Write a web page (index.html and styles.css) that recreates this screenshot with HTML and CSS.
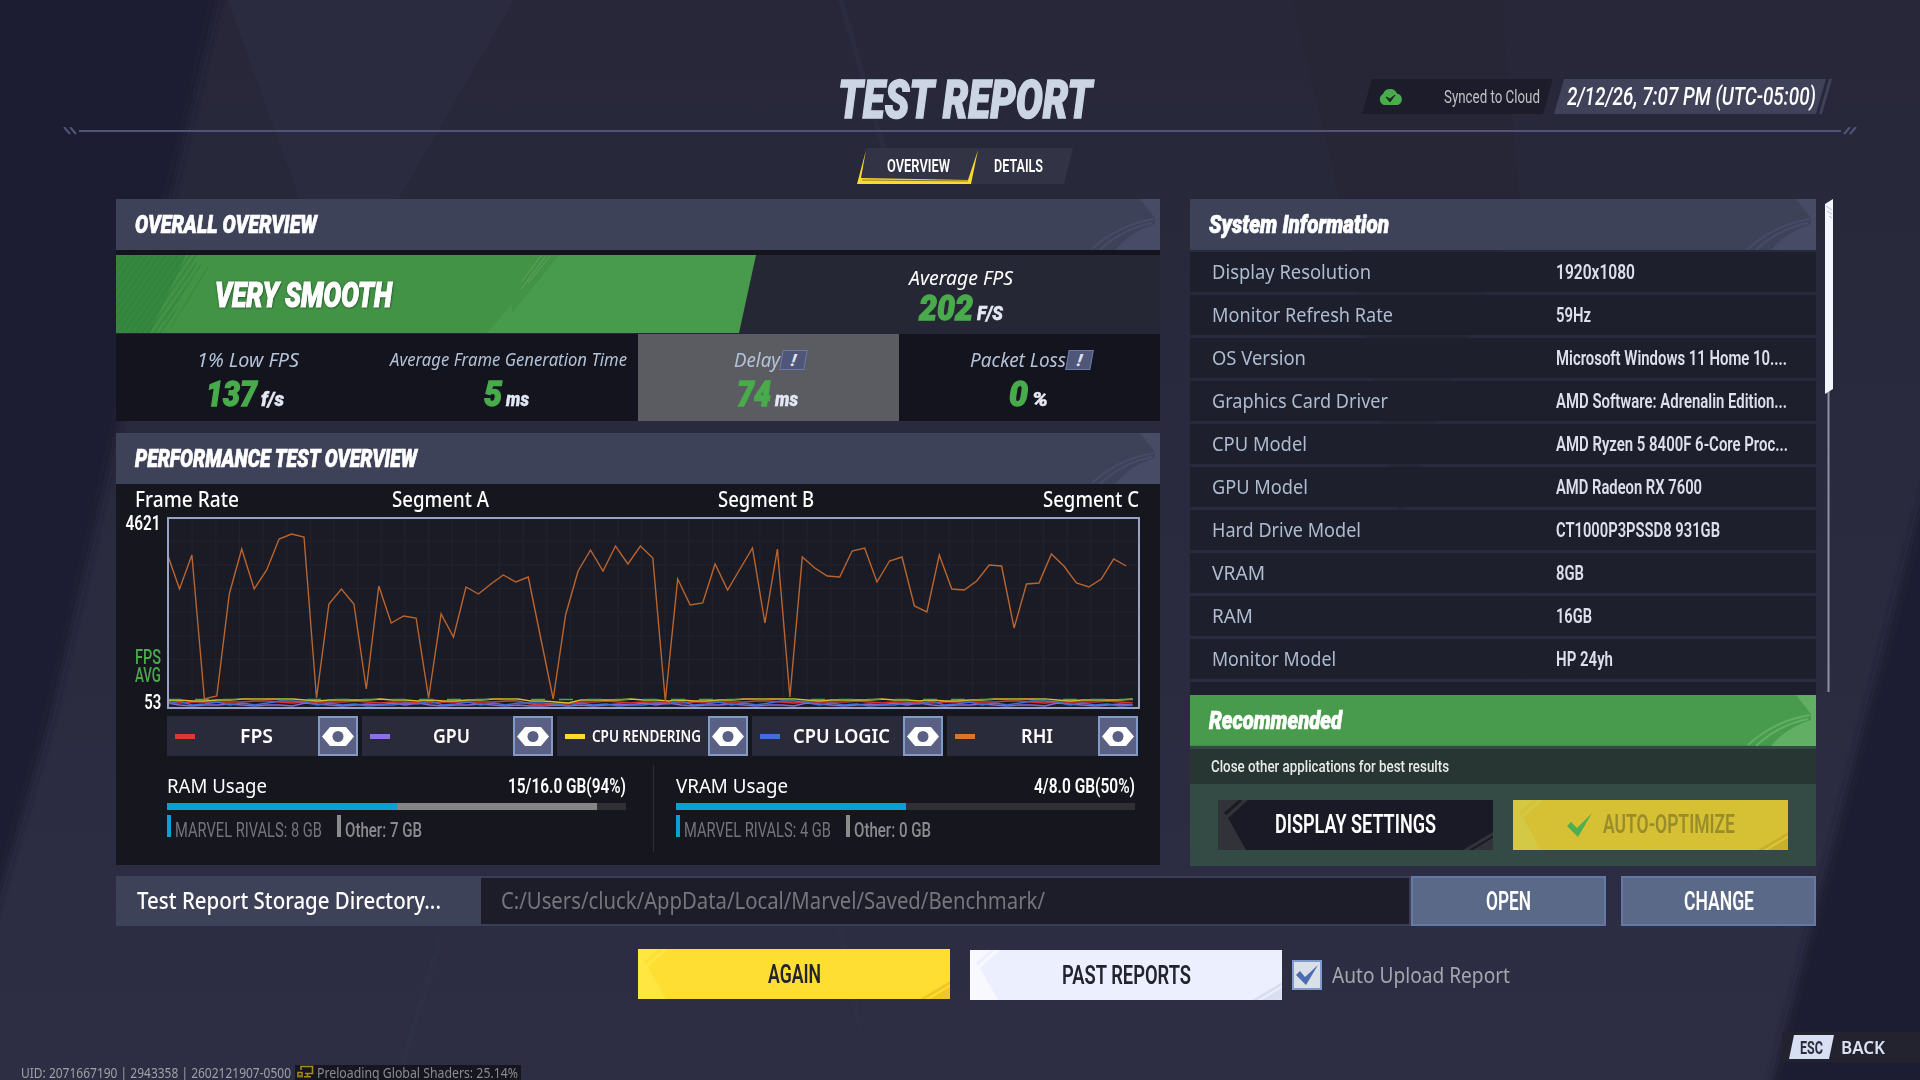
FILE: index.html
```html
<!DOCTYPE html>
<html lang="en">
<head>
    <meta charset="UTF-8">
    <title>Test Report</title>
    <link rel="stylesheet" href="styles.css">
</head>
<body>
    <svg class="backdrop" viewBox="0 0 1920 1080">
        <defs>
            <linearGradient id="bg" x1="0" y1="0" x2="0" y2="1">
                <stop offset="0" stop-color="#272739"/>
                <stop offset="1" stop-color="#2d2e44"/>
            </linearGradient>
            <filter id="soft"><feGaussianBlur stdDeviation="5"/></filter>
        </defs>
        <rect width="1920" height="1080" fill="url(#bg)"/>
        <polygon points="224,-10 520,-10 340,300 300,200" fill="#2a2b3f"/>
        <polygon points="1290,-10 1500,-10 1520,200 1400,520 1340,200" fill="#272636"/>
        <polygon points="-20,-20 222,-20 170,199 106,480 50,720 -20,960" fill="#1b1b31" filter="url(#soft)"/>
        <polygon points="1930,470 1860,740 1808,940 1770,1090 1930,1090" fill="#1d1d33" filter="url(#soft)"/>
        <path d="M838 -10L890 170M440 940L395 1090M840 930L860 1030" stroke="#303349" stroke-width="5" opacity=".4"/>
    </svg>

    <header class="top">
        <h1><span data-w="254">TEST REPORT</span></h1>
        <div class="badges">
            <div class="synced">
                <svg width="26" height="16" viewBox="0 0 26 16"><path d="M6 16a6 6 0 0 1-1-11A7.5 7.5 0 0 1 19 4.500a6 6 0 0 1 1 11.500z" fill="#49ab4b"/><path d="M8 8l4 5 5-7-5 4z" fill="#1c2a24" stroke="#1c2a24"/></svg>
                <span data-w="96">Synced to Cloud</span>
            </div>
            <div class="date"><span data-w="249">2/12/26, 7:07 PM (UTC-05:00)</span></div>
            <i class="date-edge"></i>
        </div>
    </header>
    <svg class="rule" width="1794" height="10" viewBox="0 0 1794 10">
        <path d="M16 4H1778" stroke="#50547a" stroke-width="2"/>
        <path d="M1 0l6 7M7 0l6 7M1793 0l-6 7M1787 0l-6 7" stroke="#50547a" stroke-width="2"/>
    </svg>

    <nav class="tabs">
        <svg width="218" height="37" viewBox="0 0 218 37">
            <polygon points="11,0 217,0 208,36 2,36" fill="#323446"/>
            <path d="M10 2L1 36H115L122 2L112 32L5 30z" fill="#ffd92b"/>
            <path d="M6 32L112 33" stroke="#8a7a30" stroke-width="1"/>
        </svg>
        <a class="tab-overview"><span data-w="63">OVERVIEW</span></a>
        <a class="tab-details"><span data-w="49">DETAILS</span></a>
    </nav>

    <main>
        <div class="left">
            <section class="panel">
                <h2><span data-w="182">OVERALL OVERVIEW</span><svg class="swoosh"><use href="#swoosh"/></svg></h2>
                <div class="rating">
                    <svg width="640" height="78" viewBox="0 0 640 78">
                        <defs><pattern id="hatch" width="5" height="5" patternUnits="userSpaceOnUse" patternTransform="rotate(35)"><rect width="1.500" height="5" fill="#2e7f3b"/></pattern></defs>
                        <polygon points="0,0 640,0 623,78 0,78" fill="#489b4c"/>
                        <polygon points="0,0 443,0 396,58 396,49 371,78 0,78" fill="#439346"/>
                        <polygon points="0,0 70,0 34,78 0,78" fill="#36883f"/>
                        <polygon points="0,0 84,0 50,78 0,78" fill="url(#hatch)" opacity=".7"/>
                        <path d="M92 12L55 72M86 8L48 66" stroke="#36883f" stroke-width="1.500" opacity=".6"/>
                        <path d="M430 1L405 34M434 1L412 28M425 1L406 26" stroke="#6fb072" stroke-width="1" opacity=".6"/>
                    </svg>
                    <strong><span data-w="177">VERY SMOOTH</span></strong>
                    <div class="average">
                        <em><span data-w="104">Average FPS</span></em>
                        <p><b><span data-w="54">202</span></b><small><span data-w="26">F/S</span></small></p>
                    </div>
                </div>
                <div class="stats">
                    <div><em><span data-w="102">1% Low FPS</span></em><p><b><span data-w="51">137</span></b><small><span data-w="23">f/s</span></small></p></div>
                    <div><em class="small"><span data-w="237">Average Frame Generation Time</span></em><p><b><span data-w="18">5</span></b><small><span data-w="23">ms</span></small></p></div>
                    <div class="hover"><em><span data-w="46">Delay</span><i class="info">!</i></em><p><b><span data-w="34">74</span></b><small><span data-w="23">ms</span></small></p></div>
                    <div><em><span data-w="96">Packet Loss</span><i class="info">!</i></em><p><b><span data-w="19">0</span></b><small><span data-w="16">%</span></small></p></div>
                </div>
            </section>

            <section class="panel perf">
                <h2><span data-w="282">PERFORMANCE TEST OVERVIEW</span><svg class="swoosh"><use href="#swoosh"/></svg></h2>
                <div class="segments">
                    <span data-w="104">Frame Rate</span>
                    <span data-w="97">Segment A</span>
                    <span data-w="96">Segment B</span>
                    <span data-w="96">Segment C</span>
                </div>
                <div class="chart-row">
                    <div class="axis">
                        <span data-w="35">4621</span>
                        <span class="avg" data-w="26">FPS</span>
                        <span class="avg" data-w="26">AVG</span>
                        <span data-w="17">53</span>
                    </div>
                    <svg id="chart" width="973" height="192" viewBox="0 0 973 192">
                        <defs><pattern id="grid" x="2" y="1" width="23.650" height="23.650" patternUnits="userSpaceOnUse"><path d="M23.150 0V23.650M0 23.150H23.650" stroke="#21222e"/></pattern></defs>
                        <rect width="973" height="192" fill="#1b1b25"/>
                        <rect width="973" height="192" fill="url(#grid)"/>
                    </svg>
                </div>
                <div class="legend">
                    <div><i class="fps"></i><span data-w="33">FPS</span><svg><use href="#eye"/></svg></div>
                    <div><i class="gpu"></i><span data-w="37">GPU</span><svg><use href="#eye"/></svg></div>
                    <div><i class="cpu-r"></i><span class="tiny" data-w="109">CPU RENDERING</span><svg><use href="#eye"/></svg></div>
                    <div><i class="cpu-l"></i><span data-w="97">CPU LOGIC</span><svg><use href="#eye"/></svg></div>
                    <div><i class="rhi"></i><span data-w="32">RHI</span><svg><use href="#eye"/></svg></div>
                </div>
                <div class="memory">
                    <div>
                        <p class="usage"><span data-w="100">RAM Usage</span><b><span data-w="118">15/16.0 GB(94%)</span></b></p>
                        <div class="bar"><i style="width: 230px"></i><u style="width: 200px"></u></div>
                        <p class="split"><span data-w="147">MARVEL RIVALS: 8 GB</span><i class="other"></i><span class="lit" data-w="77">Other: 7 GB</span></p>
                    </div>
                    <hr>
                    <div>
                        <p class="usage"><span data-w="112">VRAM Usage</span><b><span data-w="101">4/8.0 GB(50%)</span></b></p>
                        <div class="bar"><i style="width: 230px"></i></div>
                        <p class="split"><span data-w="147">MARVEL RIVALS: 4 GB</span><i class="other"></i><span class="lit" data-w="77">Other: 0 GB</span></p>
                    </div>
                </div>
            </section>
        </div>

        <div class="right">
            <section class="system">
                <h2><span data-w="180">System Information</span><svg class="swoosh"><use href="#swoosh"/></svg></h2>
                <dl>
                    <div><dt><span data-w="159">Display Resolution</span></dt><dd><span data-w="79">1920x1080</span></dd></div>
                    <div><dt><span data-w="181">Monitor Refresh Rate</span></dt><dd><span data-w="35">59Hz</span></dd></div>
                    <div><dt><span data-w="94">OS Version</span></dt><dd><span data-w="231">Microsoft Windows 11 Home 10....</span></dd></div>
                    <div><dt><span data-w="176">Graphics Card Driver</span></dt><dd><span data-w="231">AMD Software: Adrenalin Edition...</span></dd></div>
                    <div><dt><span data-w="95">CPU Model</span></dt><dd><span data-w="232">AMD Ryzen 5 8400F 6-Core Proc...</span></dd></div>
                    <div><dt><span data-w="96">GPU Model</span></dt><dd><span data-w="146">AMD Radeon RX 7600</span></dd></div>
                    <div><dt><span data-w="149">Hard Drive Model</span></dt><dd><span data-w="164">CT1000P3PSSD8 931GB</span></dd></div>
                    <div><dt><span data-w="53">VRAM</span></dt><dd><span data-w="28">8GB</span></dd></div>
                    <div><dt><span data-w="41">RAM</span></dt><dd><span data-w="36">16GB</span></dd></div>
                    <div><dt><span data-w="124">Monitor Model</span></dt><dd><span data-w="57">HP 24yh</span></dd></div>
                    <div></div>
                </dl>
            </section>
            <section class="recommended">
                <h2><span data-w="133">Recommended</span><svg class="swoosh"><use href="#swoosh"/></svg></h2>
                <p class="tip"><span data-w="238">Close other applications for best results</span></p>
                <div class="actions">
                    <button class="btn dark"><svg class="cut-l"><use href="#cut-l"/></svg><svg class="cut-r"><use href="#cut-r"/></svg><span data-w="161">DISPLAY SETTINGS</span></button>
                    <button class="btn gold"><svg class="cut-l"><use href="#cut-l"/></svg><svg class="cut-r"><use href="#cut-r"/></svg><svg class="tick" width="25" height="24" viewBox="0 0 25 24"><path d="M0 13L4 9L10 15L25 0L11 24z" fill="#4fae50"/></svg><span data-w="132">AUTO-OPTIMIZE</span></button>
                </div>
            </section>
        </div>
        <svg class="scroll" width="8" height="494" viewBox="0 0 8 494">
            <path d="M3.500 190V493" stroke="#8f919c" stroke-width="2"/>
            <polygon points="0,5 8,0 8,190 0,195" fill="#f3f5ff"/>
            <path d="M1 7l6 4M2 12l5 3M4 17l3 2" stroke="#b5bdd8"/>
        </svg>
    </main>

    <div class="storage">
        <label><span data-w="304">Test Report Storage Directory...</span></label>
        <div class="path"><span data-w="544">C:/Users/cluck/AppData/Local/Marvel/Saved/Benchmark/</span></div>
        <button><span data-w="45">OPEN</span></button>
        <button class="change"><span data-w="70">CHANGE</span></button>
    </div>

    <div class="bottom">
        <button class="btn again"><svg class="cut-l"><use href="#cut-l"/></svg><svg class="cut-r"><use href="#cut-r"/></svg><span data-w="53">AGAIN</span></button>
        <button class="btn past"><svg class="cut-l"><use href="#cut-l"/></svg><svg class="cut-r"><use href="#cut-r"/></svg><span data-w="129">PAST REPORTS</span></button>
        <div class="check"><svg width="24" height="24" viewBox="0 0 24 24"><path d="M1 12L5 8L10 14L23 2L11 22z" fill="#4d6bb0"/></svg></div>
        <span class="auto" data-w="178">Auto Upload Report</span>
    </div>

    <footer>
        <div class="status">
            <span data-w="270">UID: 2071667190 | 2943358 | 2602121907-0500</span>
            <div class="loading">
                <svg width="17" height="13" viewBox="0 0 17 13"><path d="M4 5V1.500H15.500V8.500H8M7 11.800H14M10.500 8V11M1 12.500V7.500H5V12.500M3 12.500V10" fill="none" stroke="#a58a1c" stroke-width="1.600"/></svg>
                <span data-w="201">Preloading Global Shaders: 25.14%</span>
            </div>
        </div>
        <div class="back"><kbd><span data-w="23">ESC</span></kbd><span data-w="44">BACK</span></div>
    </footer>

    <svg class="symbols">
        <symbol id="swoosh" viewBox="0 0 72 51">
            <path d="M52 0H72V51H27Q43 32 67 25V19z"/>
            <path d="M4 50Q30 26 66 20M12 51Q34 30 64 24" fill="none" stroke="currentColor" stroke-width="2"/>
        </symbol>
        <symbol id="eye" viewBox="0 0 40 40">
            <rect x="1" y="1" width="38" height="38" fill="#596084" stroke="#819bc6" stroke-width="2"/>
            <path d="M4 20.500L12 11H28L36 20.500L28 30H12z" fill="#fff"/>
            <circle cx="20" cy="20.500" r="5.500" fill="#596084"/>
        </symbol>
        <symbol id="cut-l" viewBox="0 0 32 50">
            <path d="M0 0H30L10 18L28 50H0z"/>
            <path d="M7 14L23 0" fill="none" stroke="currentColor" stroke-width="3"/>
        </symbol>
        <symbol id="cut-r" viewBox="0 0 32 50">
            <path d="M2 50L32 32V50z"/>
            <path d="M8 51L33 36" fill="none" stroke="currentColor" stroke-width="2"/>
        </symbol>
    </svg>
    <script src="script.js"></script>
</body>
</html>
```
FILE: styles.css
```css
* {
    box-sizing: border-box;
    margin: 0;
    padding: 0;
}
body {
    width: 1920px;
    height: 1080px;
    overflow: hidden;
    background: #28293d;
    color: #fff;
    font-family: Roboto, "Liberation Sans", sans-serif;
    position: relative;
}
.backdrop {
    position: absolute;
    inset: 0;
    z-index: -1;
}
.symbols {
    position: absolute;
    width: 0;
    height: 0;
}
span[data-w] {
    display: inline-block;
    white-space: nowrap;
    transform-origin: 0 50%;
    flex: none;
}
svg {
    display: block;
    flex: none;
}
button {
    border: none;
    color: inherit;
    font-family: inherit;
}

/* Title bar */
.top {
    height: 127px;
    padding: 72px 88px 0 98px;
    display: grid;
    grid-template-columns: 1fr auto 1fr;
}
h1 {
    grid-column: 2;
    font-size: 54px;
    line-height: 55px;
    font-weight: 900;
    font-style: italic;
    color: #cbd5e4;
    -webkit-text-stroke: 1.5px #cbd5e4;
}
.badges {
    display: flex;
    justify-content: flex-end;
    padding-top: 7px;
    height: 42px;
}
.synced {
    width: 191px;
    background: #1c1c2a;
    clip-path: polygon(10px 0, 100% 0, 181px 100%, 0 100%);
    display: flex;
    align-items: center;
    justify-content: space-between;
    padding: 0 13px 0 16px;
    font-size: 17.5px;
    color: #c0c0c6;
}
.date {
    width: 272px;
    margin-left: 1px;
    padding-left: 13px;
    background: #3f4259;
    clip-path: polygon(10px 0, 100% 0, 262px 100%, 0 100%);
    display: flex;
    align-items: center;
    font-size: 25px;
    font-style: italic;
    font-weight: 500;
}
.date-edge {
    width: 13px;
    margin-left: -7px;
    background: #3f4259;
    clip-path: polygon(10px 0, 100% 0, 3px 100%, 0 100%);
}
.rule {
    margin-left: 63px;
}

/* Tabs */
.tabs {
    margin: 11px 0 0 856px;
    height: 51px;
    display: flex;
    font-size: 18.5px;
    line-height: 36px;
    font-weight: 600;
}
.tab-overview {
    margin-left: -187px;
    z-index: 1;
}
.tab-details {
    margin-left: 44px;
    z-index: 1;
}

/* Panels */
main {
    display: flex;
    margin-left: 116px;
    height: 667px;
}
.left {
    width: 1043.5px;
    display: flex;
    flex-direction: column;
    gap: 12px;
}
h2 {
    height: 51px;
    padding-left: 19px;
    display: flex;
    align-items: center;
    justify-content: space-between;
    background: #3e4259;
    font-size: 25px;
    font-weight: 900;
    font-style: italic;
    -webkit-text-stroke: .7px #fff;
}
.swoosh {
    width: 72px;
    height: 51px;
    fill: #474b66;
    color: #474b66;
}
.panel {
    background: #14141f;
}
.rating {
    margin-top: 5px;
    height: 79px;
    background: #262735;
    display: flex;
    border-bottom: 1px solid #262735;
}
.rating strong {
    width: 541px;
    margin-left: -541px;
    font-size: 35px;
    font-weight: 900;
    font-style: italic;
    line-height: 82px;
    -webkit-text-stroke: 1.2px #fff;
    text-shadow: 0 0 3px #1f4d28, 1px 1px 2px #1f4d28;
}
.average {
    width: 411px;
    padding: 10px 0 0 11px;
    text-align: center;
}
em {
    display: flex;
    justify-content: center;
    font-family: "Noto Sans", sans-serif;
    font-size: 19.5px;
    line-height: 25px;
}
.rating p,
.stats p {
    display: flex;
    justify-content: center;
    align-items: baseline;
    gap: 4px;
}
.rating p {
    margin-top: -1px;
}
p b {
    font-size: 35px;
    line-height: 40px;
    font-weight: 900;
    font-style: italic;
    color: #49ab4b;
}
.rating b,
.stats b {
    -webkit-text-stroke: 1.3px #49ab4b;
}
small {
    font-size: 20px;
    font-weight: 900;
    font-style: italic;
    color: #e4e8f5;
    -webkit-text-stroke: .4px #e4e8f5;
}
.stats {
    display: grid;
    grid-template-columns: repeat(4, 1fr);
    height: 87px;
}
.stats div {
    padding: 13px 0 0 3px;
}
.stats em {
    color: #b3c2d6;
}
.stats .small {
    font-size: 18px;
}
.stats p {
    margin-top: 3px;
    margin-right: 5px;
}
.stats .hover {
    background: #5b5b62;
}
.info {
    width: 25px;
    height: 20px;
    margin: 3px 0 0 1px;
    background: #4f5679;
    border: 1px solid #6c7aa5;
    transform: skewX(-10deg);
    text-align: center;
    font-family: Roboto, sans-serif;
    font-size: 17px;
    line-height: 18px;
    font-weight: 900;
    color: #dfe3ee;
}

/* Performance panel */
.perf {
    height: 432px;
    background: #16161f;
}
.segments {
    display: flex;
    height: 33px;
    padding: 0 19px;
    font-family: "Noto Sans", sans-serif;
    font-size: 21px;
    line-height: 30px;
    font-weight: 500;
}
.segments span:nth-child(2) {
    margin-left: 153px;
}
.segments span:nth-child(3) {
    margin-left: 229px;
}
.segments span:nth-child(4) {
    margin-left: 229px;
}
.chart-row {
    display: flex;
    height: 192px;
}
.axis {
    width: 51px;
    padding-right: 6px;
    display: flex;
    flex-direction: column;
    align-items: flex-end;
    font-size: 19.5px;
    font-weight: 600;
    line-height: 18px;
}
.axis span:first-child {
    margin-top: -2px;
}
.axis span:nth-child(2) {
    margin-top: 116px;
}
.axis span:last-child {
    margin-top: 9px;
}
.axis .avg {
    color: #49ab4b;
    font-weight: 500;
}
#chart polyline {
    fill: none;
    stroke-width: 1.4;
}
.legend {
    display: flex;
    gap: 4px;
    margin: 7px 0 0 51px;
}
.legend div {
    width: 191px;
    height: 40px;
    display: flex;
    align-items: center;
    justify-content: space-between;
    background: #292b3a;
    padding-left: 8px;
    font-family: "Noto Sans", sans-serif;
    font-size: 20px;
    line-height: 36px;
    font-weight: 600;
}
.legend .tiny {
    font-size: 16px;
}
.legend svg {
    width: 40px;
    height: 40px;
}
.legend i {
    width: 20px;
    height: 5px;
}
.fps { background: #e43535; }
.gpu { background: #8f6fe6; }
.cpu-r { background: #ffd92b; }
.cpu-l { background: #3e70d8; }
.rhi { background: #d87630; }

.memory {
    display: flex;
    margin: 9px 0 0 51px;
}
.memory > div {
    width: 459px;
    padding-top: 6px;
}
.memory hr {
    width: 1px;
    height: 87px;
    border: none;
    background: #2c2d3a;
    margin: 0 22px 0 27px;
}
.usage {
    display: flex;
    justify-content: space-between;
    height: 32px;
    font-family: "Noto Sans", sans-serif;
    font-size: 20.5px;
    line-height: 29px;
}
.usage b {
    font-family: Roboto, sans-serif;
    font-size: 20.5px;
    line-height: 30px;
    font-weight: 600;
    font-style: normal;
    color: #fff;
}
.bar {
    display: flex;
    height: 7px;
    background: #303034;
}
.bar i {
    background: #0a9fd5;
}
.bar u {
    background: #858587;
}
.split {
    display: flex;
    margin-top: 5px;
    height: 22px;
    border-left: 4px solid #0a9fd5;
    padding-left: 4px;
    font-size: 20.5px;
    line-height: 30px;
    color: #74747a;
}
.split .other {
    width: 4px;
    height: 22px;
    background: #8c8c8e;
    margin: 0 4px 0 15px;
}
.split .lit {
    color: #8c8c90;
    font-weight: 500;
}

/* System information */
.right {
    width: 626px;
    margin-left: 30.5px;
}
.system {
    height: 496px;
    overflow: hidden;
}
dl {
    padding-top: 2px;
}
dl div {
    display: flex;
    height: 40px;
    margin-bottom: 3px;
    padding-left: 22px;
    background: #1e1f2c;
    line-height: 40px;
}
dt {
    width: 344px;
    font-family: "Noto Sans", sans-serif;
    font-size: 20.5px;
    line-height: 39px;
    color: #aebccf;
}
dd {
    font-size: 21px;
    font-weight: 600;
    color: #dde0ec;
}
.recommended {
    height: 171px;
    background: #334a45;
}
.recommended h2 {
    background: #489b4c;
    border-bottom: 1px solid #448c4b;
}
.recommended .swoosh {
    fill: #62ae64;
    color: #62ae64;
}
.tip {
    margin-top: 3px;
    height: 35px;
    padding-left: 21px;
    background: #273632;
    font-size: 17px;
    line-height: 35px;
    font-weight: 500;
    color: #e8ebe8;
}
.actions {
    display: flex;
    gap: 20px;
    padding: 16px 28px;
}
.btn {
    position: relative;
    width: 275px;
    height: 50px;
    display: flex;
    align-items: center;
    justify-content: center;
    font-size: 25px;
    line-height: 30px;
    font-weight: 600;
}
.btn .cut-l,
.btn .cut-r {
    position: absolute;
    top: 0;
    left: 0;
    width: 32px;
    height: 50px;
}
.btn .cut-r {
    left: auto;
    right: 0;
}
.dark {
    background: #191a26;
    fill: #323338;
    color: #fff;
}
.dark .cut-l,
.dark .cut-r {
    color: #191a26;
}
.gold {
    background: #d6c034;
    color: #998c2b;
}
.gold .cut-l {
    fill: #d4c944;
    color: #d6c034;
}
.gold .cut-r {
    fill: #c9b02a;
    color: #dcc83c;
}
.tick {
    margin-right: 11px;
}
.scroll {
    margin-left: 9px;
}

/* Storage directory */
.storage {
    display: flex;
    margin: 10px 0 0 116px;
    height: 50px;
}
.storage label {
    width: 365px;
    padding-left: 21px;
    background: #3e4259;
    font-family: "Noto Sans", sans-serif;
    font-size: 23px;
    line-height: 49px;
    font-weight: 500;
}
.path {
    width: 930px;
    border: 2px solid #3b3e54;
    border-left: none;
    background: #1c1d28;
    padding-left: 20px;
    font-family: "Noto Sans", sans-serif;
    font-size: 23px;
    line-height: 45px;
    color: #74757d;
}
.storage button {
    width: 195px;
    background: #5b6989;
    border: 2px solid #6878a6;
    font-size: 25px;
    font-weight: 600;
    display: flex;
    align-items: center;
    justify-content: center;
}
.storage .change {
    margin-left: 15px;
}

/* Bottom buttons */
.bottom {
    display: flex;
    margin: 23px 0 0 638px;
    height: 51px;
    align-items: center;
}
.bottom .btn {
    width: 312px;
    color: #22232e;
    padding-top: 1px;
}
.again {
    background: #ffde33;
    align-self: flex-start;
}
.again .cut-l {
    fill: #ffe640;
    color: #ffde33;
}
.again .cut-r {
    fill: #efc728;
    color: #ffde33;
}
.bottom .past {
    margin-left: 20px;
    background: #eceffe;
    align-self: flex-end;
}
.past .cut-l {
    fill: #f8f9ff;
    color: #eceffe;
}
.past .cut-r {
    fill: #d9dff0;
    color: #eceffe;
}
.check {
    width: 30px;
    height: 30px;
    margin: 1px 10px 0;
    padding: 1px;
    background: #dbdfe8;
    border: 2px solid #7f9acb;
}
.auto {
    font-family: "Noto Sans", sans-serif;
    font-size: 21px;
    line-height: 26px;
    color: #a5a6ae;
}

/* Footer */
footer {
    display: flex;
    justify-content: space-between;
    margin-top: 32px;
    height: 48px;
}
.status {
    display: flex;
    align-items: flex-end;
    padding-left: 21px;
    font-family: "Noto Sans", sans-serif;
    font-size: 15px;
    line-height: 15px;
    color: #a0a0a8;
}
.loading {
    display: flex;
    gap: 3px;
    width: 226px;
    height: 15px;
    margin-left: 4px;
    padding-left: 2px;
    background: #16161f;
    color: #8b8b91;
}
.back {
    width: 138px;
    height: 30px;
    display: flex;
    align-items: center;
    background: #22232f;
    padding-left: 7px;
    font-family: "Noto Sans", sans-serif;
    font-size: 17.5px;
    font-weight: 600;
    color: #dde2f3;
}
kbd {
    width: 45px;
    height: 24px;
    margin-right: 7px;
    background: #d9dff3;
    clip-path: polygon(5px 0, 100% 0, 40px 100%, 0 100%);
    display: flex;
    align-items: center;
    justify-content: center;
    font-family: Roboto, sans-serif;
    font-size: 19px;
    font-weight: 700;
    color: #2b2d3b;
}
```
FILE: script.js
```js
// Squeeze every label horizontally to its condensed width
document.querySelectorAll('span[data-w]').forEach(el => {
    const natural = el.getBoundingClientRect().width;
    const target = Number(el.dataset.w);
    el.style.transform = `scaleX(${target / natural})`;
    if (el.closest('.axis')) {
        el.style.transformOrigin = '100% 50%';
    } else {
        el.style.marginRight = `${target - natural}px`;
    }
});

const chart = document.getElementById('chart');
const NS = 'http://www.w3.org/2000/svg';

function line(points, color, dash) {
    const p = document.createElementNS(NS, 'polyline');
    p.setAttribute('points', points.map(([x, y]) => `${x.toFixed(1)},${y.toFixed(1)}`).join(' '));
    p.setAttribute('stroke', color);
    if (dash) p.setAttribute('stroke-dasharray', dash);
    chart.appendChild(p);
}

const rhi = [36, 72, 38, 182, 179, 77, 32, 72, 53, 22, 17, 20, 181, 87, 72, 87, 172, 69, 106, 99, 101,
    181, 97, 120, 70, 77, 67, 58, 65, 60, 121, 182, 98, 54, 33, 54, 29, 47, 29, 41, 184, 62, 88, 86, 47,
    73, 52, 31, 106, 32, 180, 40, 51, 59, 60, 34, 31, 65, 44, 40, 89, 95, 38, 72, 73, 64, 48, 49, 111,
    67, 66, 37, 49, 66, 70, 62, 42, 49];
const fps = [186, 185, 185, 186, 186, 185, 185, 185, 185, 185, 184, 184, 185, 186, 185, 185, 185, 185, 184, 185];
const gpu = [186, 188, 189, 188, 188, 187, 188, 189, 188, 188, 189, 186, 187, 188, 189, 188, 187, 188, 186, 188];
const render = [183, 184, 183, 184, 184, 183, 183, 182, 182, 182, 182, 182, 183, 184, 183, 183, 183, 183, 182, 183];
const logic = [187, 184, 188, 187, 185, 188, 186, 188, 186, 184, 184, 185, 188, 186, 188, 187, 189, 188, 188, 186];

// The lower series share one shape, with a dip where segment A ends
const wave = (base, shift) => Array.from({ length: 78 }, (_, i) => {
    const v = base[(i + shift) % base.length];
    return [i * 12.54, Math.min(189, v + (i > 28 && i < 33 ? 2 : 0))];
});

line(wave(gpu, 0), '#8466d2');
line(wave(fps, 3), '#d93434');
line(wave(logic, 0), '#3e70d8');
line(wave(render, 1), '#d8bf26');
line([[0, 182.5], [970, 182.5]], '#49ab4b', '14 14');
line(rhi.map((y, i) => [i * 12.457, y]), '#b9652f');

const frame = document.createElementNS(NS, 'rect');
for (const [k, v] of Object.entries({ x: 1, y: 1, width: 971, height: 190, fill: 'none', stroke: '#98a2c3', 'stroke-width': 2 })) {
    frame.setAttribute(k, v);
}
chart.appendChild(frame);
```
